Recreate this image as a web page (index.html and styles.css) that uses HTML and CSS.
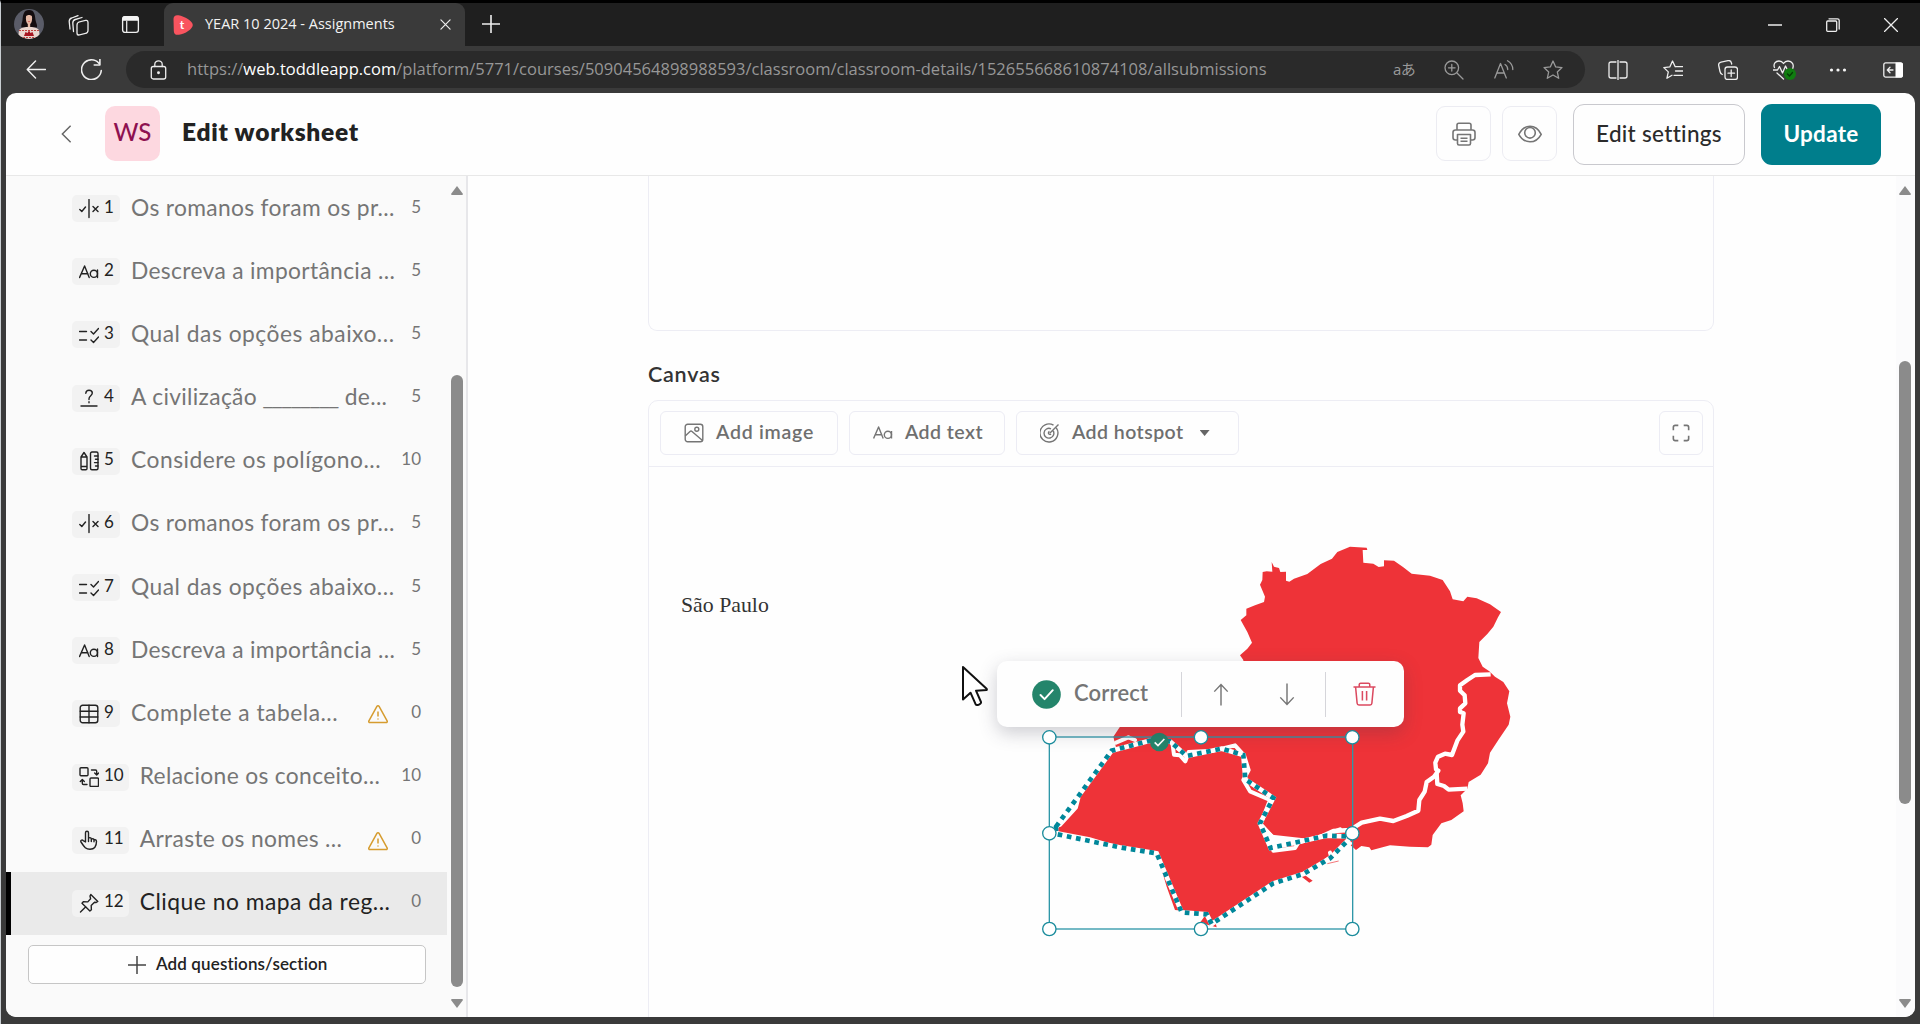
FILE: index.html
```html
<!DOCTYPE html>
<html lang="pt">
<head>
<meta charset="utf-8">
<title>YEAR 10 2024 - Assignments</title>
<link rel="stylesheet" href="styles.css">
</head>
<body>
<svg class="defs" width="0" height="0">
  <symbol id="i-tf" viewBox="0 0 20 20"><path d="M.8 10.500l2 2L6.500 8M10 .5v18M14 7.500l5 5M19 7.500l-5 5"/></symbol>
  <symbol id="i-aa" viewBox="0 0 20 20"><path d="M.6 15.500L5.600 4l4.600 11.500M2.300 11.700h6.600M18.500 8v7.500"/><circle cx="14.900" cy="11.800" r="3.600"/></symbol>
  <symbol id="i-mc" viewBox="0 0 20 20"><path d="M.5 6.500h7M.5 15h7M12 6.500L14.500 9l5-5.500M12 15l2.500 2.500 5-5.500"/></symbol>
  <symbol id="i-blank" viewBox="0 0 20 20"><path d="M2 18h16M6.800 5.200C7 3.200 8.300 2.200 10 2.200c1.900 0 3.300 1.100 3.300 2.900 0 2.400-3.300 2.900-3.300 5.600v.8M10 13.800v1"/></symbol>
  <symbol id="i-math" viewBox="0 0 20 20"><path d="M2 6l3-4.500L8 6v11.500c0 .8-.4 1.200-1.200 1.200H3.200c-.8 0-1.200-.4-1.200-1.200zM2 6h6M2 15.500h6"/><rect x="11.500" y="1" width="7.500" height="17.800" rx="1.500"/><path d="M19 5h-3.500M19 8.300h-2.500M19 11.600h-3.500M19 15h-2.500"/></symbol>
  <symbol id="i-table" viewBox="0 0 20 20"><rect x="1.200" y="1.200" width="17.600" height="17.600" rx="2.500"/><path d="M1.200 7.300h17.600M1.200 13h17.600M10 1.200v17.600"/></symbol>
  <symbol id="i-match" viewBox="0 0 20 20"><rect x="1" y=".8" width="8" height="8" rx="1"/><rect x="11" y="11" width="8.500" height="8.500" rx="1"/><path d="M12.500 3h4c.8 0 1.200.4 1.200 1.200v3M15.700 6l2 2 2-2M8 17.500H4.500c-.8 0-1.200-.4-1.200-1.200V13M1.300 14.500l2-2 2 2"/></symbol>
  <symbol id="i-hand" viewBox="0 0 20 20"><path d="M6.500 12V2.800c0-2.100 3-2.100 3 0V9c0-1.800 2.800-1.800 2.800.2v.6c0-1.500 2.700-1.400 2.700.3v.5c0-1.200 2.500-1.200 2.500.7 0 4.700-1.500 8-6.500 8-4 0-5.500-1.800-9-7.300-1-1.600 1-2.600 2.200-1.400zM9.500 9v2.500M12.300 9.500v2M15 10.300v1.500"/></symbol>
  <symbol id="i-pin" viewBox="0 0 20 20"><path d="M11.800 1.500l7 7-1.600 1-1.700-.3-3.300 3.300.2 4.200-1.500 1.300L3 10.200 4.300 8.700l4.500.2 2.800-3.200-.6-2.600zM6.800 13.800L1.500 19"/></symbol>
  <symbol id="i-warn" viewBox="0 0 20 20"><path d="M8.900 2.300c.5-.9 1.700-.9 2.200 0l8 14.600c.4.800 0 1.700-1.100 1.700H2c-1.100 0-1.500-.9-1.100-1.700zM10 7.500v5M10 14.400v1.200"/></symbol>
</svg>

<div class="tabstrip">
  <svg class="avatar" viewBox="0 0 30 30"><defs><clipPath id="av"><circle cx="15" cy="15" r="15"/></clipPath></defs><g clip-path="url(#av)"><path fill="#5a5c68" d="M0 0h30v30H0z"/><path fill="#140d10" d="M15 1C9.500 1 9 6 8.500 11c-.3 3-2 6-.8 7.500h15C24 17 22 14 21.500 11 21 6 20.500 1 15 1z"/><path fill="#e6b9a6" d="M12 7.500c.8-2 5.200-2 6 0 .5 3.500-.5 6.500-1.800 7.500v3h-2.400v-3c-1.300-1-2.300-4-1.800-7.500z"/><path fill="#c9363c" d="M13.700 12.300h2.600l-1.300 1z"/><path fill="#ead6cf" d="M5 21c3-3 6-3 10-3s7 0 10 3l1 9H4z"/><path stroke="#c2433f" stroke-dasharray="2 1" d="M5 21.500h20M6 28.500h18"/><path fill="#a81722" d="M10 27l1.500-4 2 1 1.500-2.500 1.500 2.500 2-1 1.500 4z"/></g></svg>
  <svg class="ws-ic ln" viewBox="0 0 22 22"><rect x="9" y="7" width="11" height="13" rx="2.500" transform="skewY(-14) translate(0 3.800)"/><path d="M5.500 17.500L4.800 9c0-2 .7-3 2.500-3.500L14 3.500M2 15L1.200 7.500c0-2 .7-3 2.500-3.500L10 1.600"/></svg>
  <svg class="ta-ic" viewBox="0 0 20 20"><rect x="1.700" y="1.700" width="16.600" height="16.600" rx="2.500" fill="none" stroke="#eee" stroke-width="1.400"/><path fill="#f4f4f4" d="M1.500 6V4c0-2 .5-3 3-3h11c2.500 0 3 1 3 3v2z"/><path stroke="#eee" stroke-width="1.300" d="M6 6v12"/></svg>
  <div class="tab">
    <span class="fav"><svg viewBox="0 0 20 20"><path fill="#f9545f" d="M.5 4C.5 1 2.500-.2 5.500.3c6 1 14.300 5.700 14.300 9.700S12 19 6 19.800C2.500 20.200 1 19 .8 16z"/></svg><b>t</b></span>
    <span class="tab-title">YEAR 10 2024 - Assignments</span>
    <svg class="x-ic ln" viewBox="0 0 12 12"><path d="M1 1l10 10M11 1L1 11"/></svg>
  </div>
  <svg class="plus-ic ln" viewBox="0 0 18 18"><path d="M9 0v18M0 9h18"/></svg>
  <div class="wins">
    <svg class="ln" viewBox="0 0 14 14"><path d="M0 7h14" stroke-width="1.600"/></svg>
    <svg class="ln" viewBox="0 0 14 14"><rect x=".7" y="3" width="10" height="10.300" rx="1"/><path d="M3 .8h8.500c1 0 1.700.7 1.700 1.700V11"/></svg>
    <svg class="ln" viewBox="0 0 14 14"><path d="M.5.5l13 13M13.500.5l-13 13"/></svg>
  </div>
</div>

<div class="toolbar">
  <svg class="back ln" viewBox="0 0 20 20"><path d="M20 10H1M9.500 1L.8 10l8.700 9"/></svg>
  <svg class="reload ln" viewBox="0 0 20 20"><path d="M19.300 11A9.400 9.400 0 1 1 17 4M18 .3v5.400h-5.400"/></svg>
  <div class="pill">
    <svg class="lock ln" viewBox="0 0 16 20"><rect x=".8" y="6.500" width="14.400" height="12.500" rx="2"/><path d="M4.300 6.500V4.200C4.300-.2 11.700-.2 11.700 4.200v2.300"/><circle cx="8" cy="12.700" r=".8" fill="#eee"/></svg>
    <span class="url">https://<b>web.toddleapp.com</b>/platform/5771/courses/50904564898988593/classroom/classroom-details/152655668610874108/allsubmissions</span>
    <span class="trans">aあ</span>
    <svg class="p1 dim" viewBox="0 0 20 20"><circle cx="7.800" cy="7.800" r="6.800"/><path d="M13 13l6 6M7.800 4.500v6.600M4.500 7.800h6.600"/></svg>
    <svg class="p2 dim" viewBox="0 0 20 20"><path d="M.8 18L6.500 3.500 12.300 18M3 13h7.200M11 4.500c1.800 1 2.700 2.700 2.700 5M13.500.8c3.500 2 5.300 5 5.300 8.700"/></svg>
    <svg class="p3 dim" viewBox="0 0 20 20"><path d="M10 1l2.700 5.900 6.300.7-4.700 4.300 1.400 6.400-5.700-3.300-5.700 3.300 1.400-6.400L1 7.600l6.300-.7z"/></svg>
  </div>
  <div class="tools">
    <svg class="ln" viewBox="0 0 20 20"><path d="M8 2H3C1.700 2 1 2.700 1 4v12c0 1.300.7 2 2 2h5M12 2h5c1.300 0 2 .7 2 2v12c0 1.300-.7 2-2 2h-5M10 0v20"/></svg>
    <svg class="ln" viewBox="0 0 20 20"><path d="M12.200 6.700L9.500 1 6.800 6.900.8 7.600l4.500 4.300-1.400 6.400 5.100-3M12.200 6.700H20M12.500 11H20M11 15.300h9"/></svg>
    <svg class="ln" viewBox="0 0 20 20"><rect x="7" y="7" width="12.500" height="12.500" rx="2.500"/><path d="M13.200 10v6.500M10 13.200h6.500M4.300 14.500C3 14 2.300 13 2 11.500L.7 5.500C.3 3.500 1 2.600 3 2.100L10 .7c2-.4 3 .3 3.400 2.100l.3 1.200"/></svg>
    <svg class="heart ln" viewBox="0 0 23 20"><path d="M1.500 7.500C0 4 2.500 1 6 1c2 0 3.500 1 4.500 2.500C11.500 2 13 1 15 1c4 0 6.500 3.500 4.500 8M0 10h4.500l2-3.500 3 6.500 3-7 2 4H19M4 13l6.500 6"/><circle cx="17" cy="14" r="6" fill="#107c10" stroke="none"/><path stroke="#053b05" d="M14.500 14l2 2 3-3.500"/></svg>
    <svg viewBox="0 0 20 20" fill="#f4f4f4"><circle cx="3.500" cy="10" r="1.600"/><circle cx="10" cy="10" r="1.600"/><circle cx="16.500" cy="10" r="1.600"/></svg>
    <svg class="ln" viewBox="0 0 20 20"><rect x=".8" y="2.800" width="18.400" height="14.400" rx="2"/><path fill="#fff" stroke="none" d="M12.500 2.500H18c1.300 0 2 .7 2 2v11c0 1.300-.7 2-2 2h-5.500z"/><path d="M10 10H4.500M7 7.300L4.300 10 7 12.700"/></svg>
  </div>
</div>

<div class="app">
  <header class="head">
    <svg class="chev" viewBox="0 0 12 20"><path d="M10.500 1L1.500 10l9 9"/></svg>
    <div class="ws">WS</div>
    <h1>Edit worksheet</h1>
    <div class="acts">
      <button class="sq"><svg viewBox="0 0 24 24"><path d="M5 8V3c0-1.300.6-1.800 1.800-1.800h10.400c1.200 0 1.800.5 1.800 1.800v5M5.500 18H3.500C2 18 1 17 1 15.500v-5C1 9 2 8 3.500 8h17C22 8 23 9 23 10.500v5c0 1.500-1 2.500-2.500 2.500h-2M5.500 12.500h13v9c0 1-.6 1.500-1.500 1.500H7c-.9 0-1.500-.5-1.500-1.500zM8.500 16.300h7M8.500 19.300h7"/></svg></button>
      <button class="sq"><svg viewBox="0 0 24 24"><path d="M.8 12.300C3.500 7 7.500 4.300 12 4.300s8.500 2.700 11.200 8c-2.700 5-6.700 7.500-11.200 7.500S3.500 17.300.8 12.300z"/><circle cx="12" cy="10.800" r="5.300"/></svg></button>
      <button class="edit">Edit settings</button>
      <button class="upd">Update</button>
    </div>
  </header>
  <div class="body">
    <aside class="side">
      <div class="list">
        <div class="row"><span class="badge"><svg><use href="#i-tf"/></svg><i>1</i></span><span class="t">Os romanos foram os pr...</span><span class="n">5</span></div>
        <div class="row"><span class="badge"><svg><use href="#i-aa"/></svg><i>2</i></span><span class="t">Descreva a importância ...</span><span class="n">5</span></div>
        <div class="row"><span class="badge"><svg><use href="#i-mc"/></svg><i>3</i></span><span class="t wide">Qual das opções abaixo...</span><span class="n">5</span></div>
        <div class="row"><span class="badge"><svg><use href="#i-blank"/></svg><i>4</i></span><span class="t">A civilização <span class="gap">________</span> de...</span><span class="n">5</span></div>
        <div class="row"><span class="badge"><svg><use href="#i-math"/></svg><i>5</i></span><span class="t wide">Considere os polígono...</span><span class="n">10</span></div>
        <div class="row"><span class="badge"><svg><use href="#i-tf"/></svg><i>6</i></span><span class="t">Os romanos foram os pr...</span><span class="n">5</span></div>
        <div class="row"><span class="badge"><svg><use href="#i-mc"/></svg><i>7</i></span><span class="t wide">Qual das opções abaixo...</span><span class="n">5</span></div>
        <div class="row"><span class="badge"><svg><use href="#i-aa"/></svg><i>8</i></span><span class="t">Descreva a importância ...</span><span class="n">5</span></div>
        <div class="row"><span class="badge"><svg><use href="#i-table"/></svg><i>9</i></span><span class="t wide">Complete a tabela...</span><svg class="warn"><use href="#i-warn"/></svg><span class="n">0</span></div>
        <div class="row"><span class="badge"><svg><use href="#i-match"/></svg><i>10</i></span><span class="t">Relacione os conceito...</span><span class="n">10</span></div>
        <div class="row"><span class="badge"><svg><use href="#i-hand"/></svg><i>11</i></span><span class="t">Arraste os nomes ...</span><svg class="warn"><use href="#i-warn"/></svg><span class="n">0</span></div>
        <div class="row on"><span class="badge"><svg><use href="#i-pin"/></svg><i>12</i></span><span class="t wide">Clique no mapa da reg...</span><span class="n">0</span></div>
        <button class="add"><svg viewBox="0 0 18 18"><path d="M9 0v18M0 9h18"/></svg><span>Add questions/section</span></button>
      </div>
      <div class="bar"><i class="up"></i><i class="thumb side-thumb"></i><i class="dn"></i></div>
    </aside>
    <main class="main">
      <div class="content">
        <div class="prev"></div>
        <h2>Canvas</h2>
        <section class="canvas">
          <div class="ctools">
            <button class="cb c1"><svg viewBox="0 0 20 20"><rect x="1.200" y="1.200" width="17.600" height="17.600" rx="2.500"/><circle cx="12.800" cy="6.300" r="2"/><path d="M1.200 13L6 8.500c.7-.6 1.300-.6 2 0l10.500 9"/></svg><span>Add image</span></button>
            <button class="cb c2"><svg><use href="#i-aa"/></svg><span>Add text</span></button>
            <button class="cb c3"><svg viewBox="0 0 20 20"><path d="M16.300 4.800A9 9 0 1 1 13.500 2.200M13 7.500A4.900 4.900 0 1 1 11 5.800M10 10l8.500-8.500M9.500 8.500A1.500 1.500 0 1 0 11 11"/></svg><span>Add hotspot</span><i class="caret"></i></button>
            <button class="cb full"><svg viewBox="0 0 20 20"><path d="M1.500 7V3.500c0-1.300.7-2 2-2H7M13 1.500h3.500c1.300 0 2 .7 2 2V7M18.500 13v3.500c0 1.300-.7 2-2 2H13M7 18.500H3.500c-1.300 0-2-.7-2-2V13"/></svg></button>
          </div>
          <div class="stage">
            <div class="label">São Paulo</div>
            <svg class="map" viewBox="0 0 1440 1230">
              <!-- states: Minas Gerais, Espírito Santo and Rio de Janeiro -->
              <g transform="translate(570 0)">
                <path fill="#ee3338" d="M32 270L49 256 49 236 75 226 102 216 105 200 90 164 97 150 98 126 110 124 127 125 125 96 132 110 147 114 151 126 168 125 168 152 178 155 192 146 232 132 272 102 306 86 322 66 360 50 410 53 412 60 398 60 400 98 430 101 446 111 462 109 462 91 492 92 520 112 545 131 600 137 638 150 660 184 668 208 700 214 712 200 740 205 780 223 813 246 804 262 790 290 772 312 748 336 745 384 758 410 778 424 795 440 820 456 838 484 831 520 841 560 836 584 805 630 780 668 774 700 752 734 716 756 712 776 692 796 698 820 701 844 664 870 634 880 608 915 604 944 594 952 540 950 480 946 424 961 418 952 394 948 378 960 355 940 0 900-340 660-350 620-330 590 40 590 40 390 30 376 52 356 66 338 52 306z"/>
                <g fill="none" stroke="#fff" stroke-width="13" stroke-linejoin="round">
                  <path d="M782 433L735 435 712 450 690 466 690 482 704 496 706 520 690 535 690 546 701 550 697 584 700 605 682 632 666 675 645 671 624 680 616 698 618 718 625 722 612 740 590 756 584 785 568 810 565 842 530 858 490 873 450 866 395 878 360 900 310 903 230 940 190 956 135 963 118 950 128 922 90 884"/>
                  <path d="M620 730L622 762 642 768 656 779 712 776"/>
                </g>
              </g>
              <!-- São Paulo -->
              <g transform="translate(0 570)">
                <path fill="#ee3338" d="M48 332L110 262 124 215 205 105 240 70 270 58 390 64 410 104 440 122 460 98 540 90 585 82 612 105 612 175 640 215 695 240 665 305 690 385 770 375 870 340 940 345 935 370 870 405 790 462 818 482 808 488 785 470 700 490 620 535 525 600 530 622 480 608 500 580 405 570 380 500 350 398 245 380 150 352z"/>
                <g fill="none" stroke="#fff" stroke-width="12" stroke-linejoin="round" stroke-linecap="round">
                  <path d="M228 68L265 52 285 60M398 75L402 104 420 106 436 124 446 96 520 92 585 76 612 106 626 150 610 180 630 214 690 240 662 312 694 348 700 392 765 384 775 368 860 344 900 328"/>
                  <path d="M60 315L108 262 115 235M870 398L875 415 930 370"/>
                </g>
                <path stroke="#ee3338" stroke-width="2" d="M862 431l34-8"/>
                <path class="hot-base" d="M48 320L215 92 330 62 390 64 440 108 545 86 610 105 616 178 700 234 660 310 692 384 860 347 935 350 870 415 790 462 700 490 515 612 500 583 425 577 350 400 245 383 48 342z"/>
                <path class="hot" d="M48 320L215 92 330 62 390 64 440 108 545 86 610 105 616 178 700 234 660 310 692 384 860 347 935 350 870 415 790 462 700 490 515 612 500 583 425 577 350 400 245 383 48 342z"/>
                <rect class="sel" x="28" y="51" width="910" height="576"/>
                <circle cx="358" cy="66" r="28" fill="#24856b"/><path fill="none" stroke="#fff" stroke-width="5" d="M344 67l10 10 19-20"/>
              </g>
            </svg>
            <div class="pop">
              <svg class="ok" viewBox="0 0 30 30"><circle cx="15" cy="15" r="14.800" fill="#24856b"/><path fill="none" stroke="#fff" stroke-width="2" stroke-linecap="round" stroke-linejoin="round" d="M8.800 15.500l4.200 4.300 8.500-9.300"/></svg>
              <span>Correct</span><i class="div"></i>
              <svg class="arr a1" viewBox="0 0 16 24"><path d="M8 23.500V1.500M1 9l7-7.500L15 9"/></svg>
              <svg class="arr a2" viewBox="0 0 16 24"><path d="M8 .5v22M1 15l7 7.500 7-7.500"/></svg>
              <i class="div d2"></i>
              <svg class="bin" viewBox="0 0 24 25"><path d="M.5 5.200h23M6.500 5V2.700C6.500 1.700 7 1.200 8 1.200h8c1 0 1.500.5 1.500 1.500V5M2.700 5.200l1.600 17c.1 1.200.7 1.700 1.900 1.700h11.600c1.200 0 1.800-.5 1.900-1.700l1.600-17M9.800 9.300v10M14.200 9.300v10"/></svg>
            </div>
            <svg class="map" viewBox="0 0 1440 1230"><g class="knobs" transform="translate(0 570)"><circle cx="28" cy="52" r="20"/><circle cx="483" cy="52" r="20"/><circle cx="937" cy="52" r="20"/><circle cx="28" cy="340" r="20"/><circle cx="937" cy="340" r="20"/><circle cx="28" cy="627" r="20"/><circle cx="483" cy="627" r="20"/><circle cx="937" cy="627" r="20"/></g></svg>
            <svg class="cursor" viewBox="0 0 27 42"><path fill="#fff" stroke="#111" stroke-width="2" stroke-linejoin="round" d="M2 2v32.500l7.500-6.800 5.200 11.600c.8 1.800 6.200-.3 5.300-2.300l-5-11.300 10.600-.6c.4-.1.400-1 0-1.400z"/></svg>
          </div>
        </section>
      </div>
      <div class="bar mbar"><i class="up"></i><i class="thumb main-thumb"></i><i class="dn"></i></div>
    </main>
  </div>
</div>
</body>
</html>
```
FILE: styles.css
```css
* { box-sizing: border-box; }
body { margin: 0; width: 1920px; height: 1024px; overflow: hidden; background: #3a3a3a; border-top: 3px solid #000; border-left: 1px solid #c9ced2; font-family: Lato, sans-serif; display: flex; flex-direction: column; }
button { font: inherit; margin: 0; padding: 0; background: #fefefe; cursor: pointer; }
svg { display: block; flex: none; }
.defs { position: absolute; }
.ln { fill: none; stroke: #eee; stroke-width: 1.3; stroke-linecap: round; stroke-linejoin: round; }
.dim { fill: none; stroke: #9a9a9a; stroke-width: 1.3; stroke-linecap: round; stroke-linejoin: round; width: 20px; height: 20px; }

/* browser chrome */
.tabstrip { height: 43px; flex: none; display: flex; align-items: center; background: #1f1f1f; }
.avatar { width: 30px; height: 30px; margin: 0 24px 1px 13px; }
.ws-ic { width: 22px; height: 22px; }
.ta-ic { width: 19px; height: 19px; margin: 0 24px 0 31px; }
.tab { width: 301px; height: 43px; background: #3a3a3a; border-radius: 9px 9px 0 0; display: flex; align-items: center; padding-left: 9px; }
.fav { width: 20px; height: 20px; position: relative; flex: none; margin-top: 1px; }
.fav svg { width: 20px; height: 20px; }
.fav b { position: absolute; inset: 0; color: #fff; font-size: 12px; line-height: 19px; text-align: center; padding-right: 2px; }
.tab-title { font: 14.5px/20px "Open Sans", sans-serif; color: #f3f3f3; margin: 0 44px 2px 12px; white-space: nowrap; width: 191px; }
.x-ic { width: 11px; height: 11px; }
.plus-ic { width: 18px; height: 18px; margin-left: 17px; margin-bottom: 1px; stroke-width: 1.6; }
.wins { margin-left: auto; padding-right: 22px; display: flex; gap: 44px; }
.wins svg { width: 14px; height: 14px; }
.toolbar { height: 47px; flex: none; display: flex; align-items: center; }
.back { width: 20px; height: 19px; margin-left: 25px; stroke-width: 1.5; }
.reload { width: 21px; height: 21px; margin: 0 24px 0 35px; stroke-width: 1.5; }
.pill { width: 1459px; height: 37px; border-radius: 19px; background: #2a2a2a; display: flex; align-items: center; padding-left: 24px; }
.lock { width: 17px; height: 20px; }
.url { width: 1185px; margin-left: 20px; font: 16.5px/24px "Open Sans", sans-serif; letter-spacing: .01px; color: #979797; white-space: nowrap; padding-bottom: 1px; }
.url b { font-weight: 400; color: #fff; }
.trans { width: 22px; margin: 0 29px 2px 21px; color: #9a9a9a; font: 15px/20px "Open Sans", "Noto Sans CJK JP", sans-serif; letter-spacing: -.5px; white-space: nowrap; }
.p2 { margin: 0 29px 0 30px; }
.tools { display: flex; align-items: center; gap: 35px; margin-left: 23px; }
.tools svg { width: 20px; height: 20px; }
.tools .heart { width: 23px; margin-right: -3px; }

/* page frame */
.app { height: 924px; flex: none; margin: 0 5px 0 5px; background: #fefefe; border-radius: 10px; overflow: hidden; }
.head { height: 83px; border-bottom: 1px solid #e8e8e8; display: flex; align-items: center; padding: 0 0 1px 55px; }
.chev { width: 11px; height: 20px; fill: none; stroke: #666; stroke-width: 1.6; }
.ws { width: 55px; height: 55px; margin: 0 22px 0 33px; border-radius: 10px; background: #fdd8e0; color: #8e1150; font-size: 24px; font-weight: 500; line-height: 51px; text-align: center; }
h1 { margin: 0 0 4px; font-size: 24.500px; line-height: 30px; font-weight: 800; letter-spacing: .75px; color: #222; }
.acts { margin-left: auto; margin-right: 34px; display: flex; align-items: center; gap: 11px; }
.sq { width: 55px; height: 55px; border: 1px solid #ececf2; border-radius: 9px; display: grid; place-items: center; }
.sq svg { width: 24px; height: 24px; fill: none; stroke: #757575; stroke-width: 1.6; stroke-linejoin: round; }
.edit { width: 172px; height: 61px; margin: 2px 5px 0 5px; border: 1px solid #c9c9ce; border-radius: 11px; font-size: 22.500px; font-weight: 500; letter-spacing: .3px; color: #2b2b2b; padding-bottom: 3px; }
.upd { width: 120px; height: 61px; margin-top: 2px; border: 0; border-radius: 11px; background: #007e8c; color: #fff; font-size: 22.500px; font-weight: 700; letter-spacing: .3px; padding-bottom: 3px; }
.body { height: 841px; display: flex; }

/* sidebar */
.side { width: 462px; border-right: 2px solid #e7e7ea; background: #fafafa; display: flex; }
.list { width: 441px; padding-top: 1px; }
.row { height: 63.180px; display: flex; align-items: center; padding: 0 26px 0 66px; }
.badge { height: 27px; min-width: 48px; padding: 0 5px 0 7px; margin-right: 11px; border-radius: 5px; background: #f2f2f2; display: flex; align-items: center; }
.badge svg { width: 20px; height: 20px; margin-right: 5px; fill: none; stroke: #222; stroke-width: 1.4; stroke-linecap: round; stroke-linejoin: round; }
.badge i { font-style: normal; font-size: 17px; line-height: 20px; color: #222; padding-bottom: 4px; }
.t { font-size: 22.800px; line-height: 28px; letter-spacing: .33px; color: #757575; padding-bottom: 4px; white-space: pre; }
.wide { letter-spacing: .5px; }
.gap { font-family: "Open Sans", sans-serif; font-size: 21.500px; line-height: 20px; letter-spacing: 0; }
.n { font-size: 17px; line-height: 20px; color: #757575; padding-bottom: 4px; margin-left: auto; }
.warn { width: 20px; height: 20px; margin-left: auto; margin-right: 23px; margin-top: 1px; fill: none; stroke: #d69c2f; stroke-width: 1.5; stroke-linejoin: round; }
.warn + .n { margin-left: 0; }
.on { background: #eaeaea; border-left: 5px solid #000; padding-left: 61px; }
.on .t { color: #222; }
.on .badge { background: #f2f2f2; }
.add { margin: 10px 0 0 22px; width: 398px; height: 39px; border: 1px solid #c6c6c6; border-radius: 5px; display: flex; align-items: center; padding-left: 99px; color: #222; font-size: 17px; font-weight: 600; }
.add svg { width: 18px; height: 18px; margin-right: 10px; stroke: #444; stroke-width: 1.5; }
.add span { padding-bottom: 3px; letter-spacing: .12px; }
.bar { width: 19px; padding: 10px 3px 9px 4px; display: flex; flex-direction: column; align-items: center; }
.bar i { display: block; width: 12px; }
.up { height: 9px; background: #8b8b8b; clip-path: polygon(50% 0, 100% 90%, 95% 100%, 5% 100%, 0 90%); }
.dn { height: 9px; background: #8b8b8b; clip-path: polygon(50% 100%, 100% 10%, 95% 0, 5% 0, 0 10%); margin-top: auto; }
.thumb { border-radius: 6px; background: #8b8b8b; }
.side-thumb { height: 612px; margin-top: 180px; }
.main-thumb { height: 443px; margin-top: 166px; }
.main { flex: 1; display: flex; justify-content: space-between; }
.mbar { background: #fbfbfc; padding-left: 3px; padding-right: 4px; }

/* worksheet content */
.content { width: 1066px; margin-left: 180px; }
.prev { height: 155px; border: 1px solid #ededf4; border-top: 0; border-radius: 0 0 9px 9px; }
h2 { margin: 29px 0 12px 0; font-size: 21.500px; line-height: 28px; font-weight: 600; letter-spacing: .75px; color: #333; }
.canvas { height: 640px; border: 1px solid #ededf4; border-radius: 10px 10px 0 0; }
.ctools { height: 66px; border-bottom: 1px solid #ededf4; padding: 10px 10px 0 11px; display: flex; }
.cb { height: 44px; border: 1px solid #ececf4; border-radius: 6px; display: flex; align-items: center; color: #6f6f6f; font-size: 19.500px; font-weight: 600; letter-spacing: .45px; margin-right: 11px; padding-left: 23px; }
.cb svg { width: 20px; height: 20px; fill: none; stroke: #757575; stroke-width: 1.4; stroke-linejoin: round; }
.cb span { margin-left: 12px; padding-bottom: 4px; }
.c1 { width: 178px; letter-spacing: .75px; }
.c2 { width: 156px; }
.c3 { width: 223px; }
.caret { width: 10px; height: 6px; background: #666; clip-path: polygon(0 0, 100% 0, 50% 100%); margin-left: 16px; }
.full { width: 44px; margin: 0 0 0 auto; padding: 0; justify-content: center; }
.full svg { width: 18px; height: 18px; stroke-width: 1.8; }

/* free canvas: origin is 649,467 */
.stage { position: relative; height: 570px; }
.label { position: absolute; left: 32px; top: 125px; font: 21.800px/26px "Liberation Serif", serif; color: #333; }
.map { position: absolute; left: 391px; top: 63px; width: 480px; height: 410px; }
.hot-base { fill: none; stroke: #fff; stroke-width: 14; }
.hot { fill: none; stroke: #00879a; stroke-width: 14; stroke-dasharray: 14 14; }
.sel { fill: none; stroke: #2f97a8; stroke-width: 4; }
.knobs { fill: #fff; stroke: #1b8c9c; stroke-width: 4; }
.pop { position: absolute; left: 348px; top: 194px; width: 407px; height: 66px; border-radius: 10px; background: #fefefe; box-shadow: 0 6px 18px rgba(60, 60, 80, .25); display: flex; align-items: center; padding-left: 35px; }
.ok { width: 29px; height: 29px; }
.pop span { margin: 0 32px 4px 13px; width: 75px; font-size: 22px; font-weight: 600; letter-spacing: .15px; color: #757575; }
.div { width: 1px; height: 45px; background: #d5d5da; }
.arr { width: 16px; height: 23px; fill: none; stroke: #757575; stroke-width: 1.5; }
.a1 { margin: 0 50px 0 31px; }
.d2 { margin: 0 27px 0 30px; }
.bin { width: 23px; height: 24px; fill: none; stroke: #db4a60; stroke-width: 1.6; stroke-linejoin: round; }
.cursor { position: absolute; left: 312px; top: 198px; width: 27px; height: 42px; }
```
